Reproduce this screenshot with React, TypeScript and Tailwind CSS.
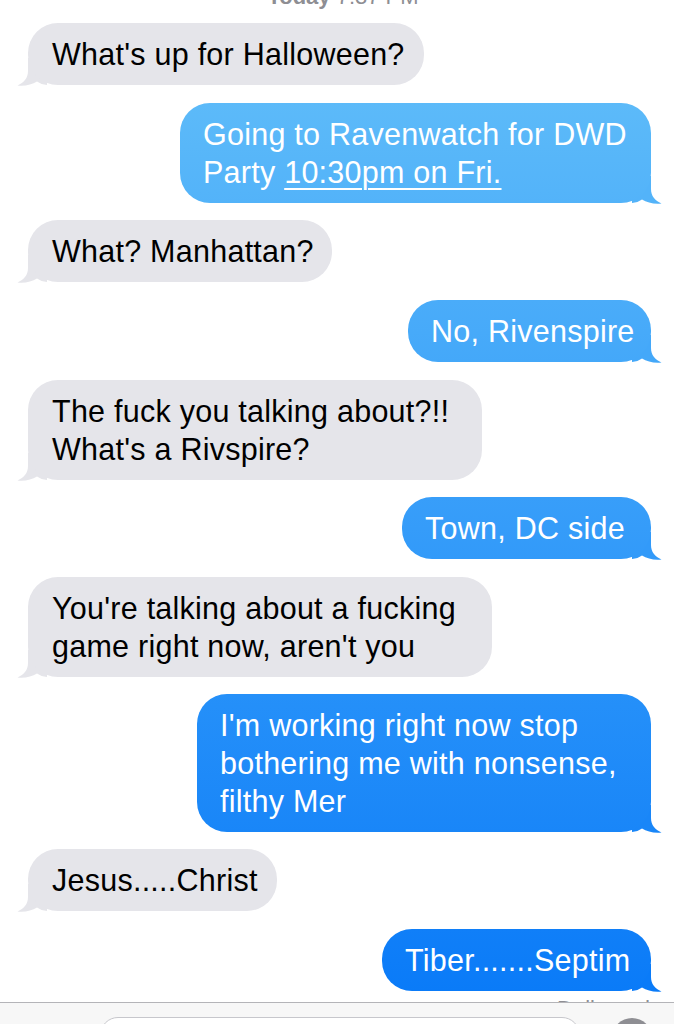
import React from "react";

type BubbleProps = {
  side: "in" | "out";
  width: string;
  mt: string;
  bg: string;
  tail: string;
  children: React.ReactNode;
};

function Tail({ side, color }: { side: "in" | "out"; color: string }) {
  return (
    <svg
      width="30"
      height="28"
      viewBox="0 0 30 28"
      className={
        side === "in"
          ? "absolute left-[-11px] bottom-[-1px]"
          : "absolute right-[-11px] bottom-[-1px] -scale-x-100"
      }
    >
      <path
        d="M11 0 V13 C11 20 7 24.5 0.5 27.6 C8 28.4 15 26.8 20 23.6 C23 25.6 26 26.8 30 27 V0 Z"
        fill={color}
      />
    </svg>
  );
}

function Bubble({ side, width, mt, bg, tail, children }: BubbleProps) {
  const isIn = side === "in";
  return (
    <div className={`flex ${isIn ? "justify-start pl-[28px]" : "justify-end pr-[23px]"} ${mt}`}>
      <div className={`relative ${width}`}>
        <Tail side={side} color={tail} />
        <div
          className={`relative rounded-[30px] py-[12px] ${
            isIn ? "pl-[24px] pr-[16px] text-black" : "pl-[23px] pr-[16px] text-white"
          } ${bg} text-[30.5px] leading-[38px] tracking-[0.25px] whitespace-nowrap`}
        >
          {children}
        </div>
      </div>
    </div>
  );
}

export default function App() {
  const gray = "bg-[#e5e5ea]";
  return (
    <div
      className="h-[1024px] w-full flex flex-col bg-white overflow-hidden"
      style={{ fontFamily: '"Liberation Sans", Arial, sans-serif' }}
    >
      <div className="flex-1 min-h-0 overflow-hidden flex flex-col">
        <div className="-mt-[14px] h-[22px] text-center pl-[12px] text-[22px] leading-[22px] text-[#8e8e93]">
          <span className="font-bold">Today</span> 7:37 PM
        </div>

        <Bubble side="in" width="w-[396px]" mt="mt-[15px]" bg={gray} tail="#e5e5ea">
          What's up for Halloween?
        </Bubble>

        <Bubble
          side="out"
          width="w-[471px]"
          mt="mt-[18px]"
          bg="bg-linear-to-b from-[#5cbaf9] to-[#53b3f9]"
          tail="#53b3f9"
        >
          Going to Ravenwatch for DWD
          <br />
          Party{" "}
          <span className="underline decoration-[2px] underline-offset-[5px]">10:30pm on Fri.</span>
        </Bubble>

        <Bubble side="in" width="w-[304px]" mt="mt-[17px]" bg={gray} tail="#e5e5ea">
          What? Manhattan?
        </Bubble>

        <Bubble
          side="out"
          width="w-[243px]"
          mt="mt-[18px]"
          bg="bg-linear-to-b from-[#4aacf9] to-[#44a8f9]"
          tail="#44a8f9"
        >
          No, Rivenspire
        </Bubble>

        <Bubble side="in" width="w-[454px]" mt="mt-[18px]" bg={gray} tail="#e5e5ea">
          The fuck you talking about?!!
          <br />
          What's a Rivspire?
        </Bubble>

        <Bubble
          side="out"
          width="w-[249px]"
          mt="mt-[17px]"
          bg="bg-linear-to-b from-[#389ef9] to-[#329af9]"
          tail="#329af9"
        >
          Town, DC side
        </Bubble>

        <Bubble side="in" width="w-[464px]" mt="mt-[18px]" bg={gray} tail="#e5e5ea">
          You're talking about a fucking
          <br />
          game right now, aren't you
        </Bubble>

        <Bubble
          side="out"
          width="w-[454px]"
          mt="mt-[17px]"
          bg="bg-linear-to-b from-[#2590f9] to-[#1986f8]"
          tail="#1986f8"
        >
          I'm working right now stop
          <br />
          bothering me with nonsense,
          <br />
          filthy Mer
        </Bubble>

        <Bubble side="in" width="w-[249px]" mt="mt-[17px]" bg={gray} tail="#e5e5ea">
          Jesus.....Christ
        </Bubble>

        <Bubble
          side="out"
          width="w-[269px]"
          mt="mt-[18px]"
          bg="bg-linear-to-b from-[#107ff8] to-[#0a7bf8]"
          tail="#0a7bf8"
        >
          Tiber.......Septim
        </Bubble>

        <div className="mt-[5px] pr-[24px] text-right text-[22px] leading-[26px] text-[#8e8e93]">
          Delivered
        </div>
      </div>

      <div className="h-[22px] shrink-0 relative border-t border-[#b4b4b8] bg-[#f7f7f7] overflow-hidden">
        <div className="absolute left-[100px] top-[14px] w-[480px] h-[40px] rounded-[18px] border border-[#c7c7cc] bg-white" />
        <div className="absolute left-[612px] top-[15px] w-[40px] h-[40px] rounded-full bg-[#8e8e93]" />
      </div>
    </div>
  );
}
